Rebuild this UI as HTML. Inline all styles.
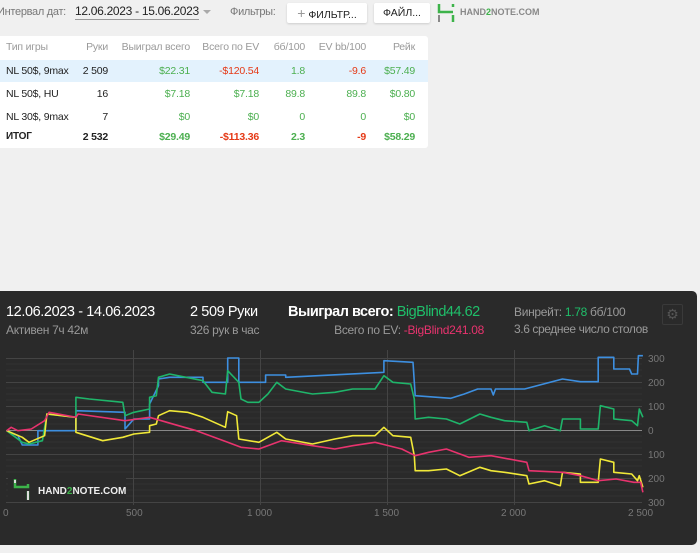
<!DOCTYPE html>
<html><head><meta charset="utf-8"><style>
*{margin:0;padding:0;box-sizing:border-box}
body{width:700px;height:553px;background:#f0f0f0;font-family:"Liberation Sans",sans-serif;position:relative;overflow:hidden}
.a{position:absolute;white-space:nowrap}
.g{color:#4caf50}.r{color:#e53916}
.card{position:absolute;left:0;top:36px;width:428px;height:112px;background:#fff;border-radius:0 3px 3px 0}
.row{position:absolute;left:0;width:428px;height:22px;font-size:10.5px;color:#222;letter-spacing:-0.2px}
.row span{position:absolute;top:5px}
.h span{color:#9a9a9a}
.c1{left:6px}.c2{right:320px}.c3{right:238px}.c4{right:169px}.c5{right:123px}.c6{right:62px}.c7{right:13px}
.btn{position:absolute;top:3px;height:20px;background:#fff;border-radius:2px;box-shadow:0 1px 2px rgba(0,0,0,.15);font-size:10.5px;color:#222;line-height:20px;text-align:center}
.panel{position:absolute;left:0;top:291px;width:697px;height:254px;background:#2a2a2a;border-radius:0 5px 5px 0}
</style></head><body>
<div class="a" style="left:-3px;top:6px;font-size:11px;color:#777;letter-spacing:-0.3px">Интервал дат:</div>
<div class="a" style="left:75px;top:4px;font-size:12px;color:#222;border-bottom:1px solid #999;padding-bottom:1px;letter-spacing:-0.3px">12.06.2023 - 15.06.2023</div>
<div class="a" style="left:203px;top:10px;width:0;height:0;border-left:4px solid transparent;border-right:4px solid transparent;border-top:4px solid #aaa"></div>
<div class="a" style="left:230px;top:6px;font-size:11px;color:#777;letter-spacing:-0.3px">Фильтры:</div>
<div class="btn" style="left:287px;width:80px"><span style="color:#999;font-size:14px">+</span> ФИЛЬТР...</div>
<div class="btn" style="left:374px;width:56px">ФАЙЛ...</div>
<svg class="a" style="left:437px;top:3px" width="20" height="20" viewBox="0 0 20 20"><path d="M2 1v8h14M16 1v3M16 12v7" stroke="#3db34a" stroke-width="2.5" fill="none"/><path d="M2 12v7" stroke="#888" stroke-width="2"/></svg>
<div class="a" style="left:460px;top:7px;font-size:9px;font-weight:bold;color:#888">HAND<span style="color:#3db34a">2</span>NOTE.COM</div>

<div class="card">
<div class="row h" style="top:0"><span class="c1">Тип игры</span><span class="c2">Руки</span><span class="c3">Выиграл всего</span><span class="c4">Всего по EV</span><span class="c5">бб/100</span><span class="c6">EV bb/100</span><span class="c7">Рейк</span></div>
<div class="row" style="top:24px;background:#e3f2fd"><span class="c1">NL 50$, 9max</span><span class="c2">2 509</span><span class="c3 g">$22.31</span><span class="c4 r">-$120.54</span><span class="c5 g">1.8</span><span class="c6 r">-9.6</span><span class="c7 g">$57.49</span></div>
<div class="row" style="top:47px"><span class="c1">NL 50$, HU</span><span class="c2">16</span><span class="c3 g">$7.18</span><span class="c4 g">$7.18</span><span class="c5 g">89.8</span><span class="c6 g">89.8</span><span class="c7 g">$0.80</span></div>
<div class="row" style="top:70px"><span class="c1">NL 30$, 9max</span><span class="c2">7</span><span class="c3 g">$0</span><span class="c4 g">$0</span><span class="c5 g">0</span><span class="c6 g">0</span><span class="c7 g">$0</span></div>
<div class="row" style="top:90px;font-weight:bold"><span class="c1" style="font-size:10px">ИТОГ</span><span class="c2">2 532</span><span class="c3 g">$29.49</span><span class="c4 r">-$113.36</span><span class="c5 g">2.3</span><span class="c6 r">-9</span><span class="c7 g">$58.29</span></div>
</div>

<div class="panel"></div>
<div class="a" style="left:6px;top:304px;font-size:14.5px;color:#fff;letter-spacing:-0.4px">12.06.2023 - 14.06.2023</div>
<div class="a" style="left:6px;top:323px;font-size:12px;color:#999;letter-spacing:-0.3px">Активен 7ч 42м</div>
<div class="a" style="left:190px;top:304px;font-size:14.5px;color:#fff;letter-spacing:-0.4px">2 509 Руки</div>
<div class="a" style="left:190px;top:323px;font-size:12px;color:#999;letter-spacing:-0.3px">326 рук в час</div>
<div class="a" style="left:288px;top:304px;font-size:14.5px;color:#fff;font-weight:bold;letter-spacing:-0.5px">Выиграл всего: <span style="color:#1fbf6a;font-weight:normal">BigBlind44.62</span></div>
<div class="a" style="right:216px;top:323px;font-size:12px;color:#999;letter-spacing:-0.3px">Всего по EV: <span style="color:#e8336e">-BigBlind241.08</span></div>
<div class="a" style="left:514px;top:305px;font-size:12px;color:#999;letter-spacing:-0.3px">Винрейт: <span style="color:#1fbf6a">1.78</span> бб/100</div>
<div class="a" style="left:514px;top:322px;font-size:12px;color:#999;letter-spacing:-0.4px">3.6 среднее число столов</div>
<div class="a" style="left:662px;top:304px;width:21px;height:21px;border:1px solid #3a3a3a;border-radius:2px;color:#555;font-size:14px;text-align:center;line-height:19px">⚙</div>

<svg class="a" style="left:0;top:0" width="700" height="553">
<g stroke="#333" stroke-width="1">
<path d="M6 364H642M6 370H642M6 376H642M6 388H642M6 394H642M6 400H642M6 412H642M6 418H642M6 424H642M6 436H642M6 442H642M6 448H642M6 460H642M6 466H642M6 472H642M6 484H642M6 490H642M6 496H642"/>
</g>
<g stroke="#444" stroke-width="1">
<path d="M6 358.5H642M6 382.5H642M6 406.5H642M6 454.5H642M6 478.5H642M6 502.5H642M133.5 350V505M260.5 350V505M387.5 350V505M514.5 350V505"/>
</g>
<path d="M6 430.5H642" stroke="#888" stroke-width="1"/>
<g fill="none" stroke-width="1.6" stroke-linejoin="round">
<polyline stroke="#3d8fe0" points="6.7,430.7 17.9,435.7 22.3,445 37.9,445 37.9,430.7 75.9,430.7 75.9,410.7 125,412.3 125,429 133.9,419 149.6,419 149.6,404 158.5,385.7 158.5,379 169.6,377.3 203,377.3 203,382.3 227.7,382.3 227.7,358 238.8,358 238.8,382.3 265.6,382.3 265.6,375 285.7,375 285.7,377.3 383.9,372.3 383.9,360.7 413,362.3 415.2,395.7 450.9,398.3 464.3,394 477.7,389 491,389 493.3,395 495.5,389 524.6,389 562.5,379 580.4,381.7 598.2,381.7 598.2,357.3 613.8,357.3 613.8,369 629.5,369 631.7,374 637.5,374 638.4,355.7 642.9,355.7"/>
<polyline stroke="#1fb56a" points="6.7,430.7 22.3,442.3 29,444 42.4,440.7 46.9,414 75.9,417.3 75.9,397.3 89.3,399 122.8,402.3 125,415.7 133.9,412.3 149.6,409 149.6,397.3 156.3,395.7 158.5,377.3 169.6,374 203,380.7 212,392.3 225.4,394 227.7,370.7 238.8,382.3 241,399 247.8,402.3 258.9,402.3 267.9,394 276.8,382.3 285.7,389 312.5,394 334.8,392.3 352.7,389 375,389 383.9,375.7 392.9,382.3 410.7,384 414.3,399 415.2,419 428.6,417.3 446.4,419 459.8,424 479.9,414 491,417.3 504.5,420.7 526.8,422.3 529,430.7 544.6,425.7 560.3,430.7 562.5,419 580.4,419 580.4,429 598.2,429 600.4,405.7 613.8,409 613.8,419 631.7,420.7 637.5,425.7 639.3,409 642.9,417.3"/>
<polyline stroke="#f0e838" points="6.7,430.7 22.3,437.3 29,442.3 44.6,435.7 46.9,414 75.9,417.3 75.9,432.3 102.7,440.7 122.8,437.3 133.9,434 149.6,432.3 149.6,425.7 156.3,424 158.5,415.7 169.6,410.7 187.5,412.3 203,417.3 225.4,427.3 227.7,411.7 236.6,415.7 238.8,439 258.9,442.3 276.8,432.3 285.7,439 312.5,444 334.8,439 352.7,435.7 375,435.7 383.9,427.3 392.9,435.7 410.7,437.3 414.3,455.7 415.2,470.7 428.6,470.7 446.4,469 459.8,475.7 479.9,467.3 491,470.7 504.5,472.3 526.8,475.7 529,484 544.6,480.7 560.3,485.7 562.5,472.3 580.4,474 580.4,482.3 598.2,482.3 600.4,459 613.8,462.3 613.8,472.3 631.7,474 637.5,480.7 639.3,475.7 642.9,487.3"/>
<polyline stroke="#e8336e" points="6.7,430.7 11.2,427.3 17.9,430.7 31.3,429 44.6,420.7 49.1,412.3 75.9,417.3 78.1,414 125,420.7 149.6,417.3 178.6,425.7 196.4,430.7 227.7,442.3 241,447.3 258.9,449 281.3,440.7 312.5,445.7 334.8,449 352.7,445.7 375,442.3 401.8,449 415.2,455.7 428.6,452.3 446.4,449 468.8,457.3 491,455.7 526.8,462.3 529,470.7 562.5,472.3 580.4,475.7 598.2,480.7 616.1,479 633.9,482.3 640.6,482.3 642.9,492.3"/>
</g>
<g fill="#777" font-family="Liberation Sans" font-size="10">
<text x="648" y="362">300</text><text x="648" y="386">200</text><text x="648" y="410">100</text><text x="648" y="434">0</text><text x="648" y="458">100</text><text x="648" y="482">200</text><text x="648" y="506">300</text>
<text x="3" y="516">0</text><text x="126" y="516">500</text><text x="247" y="516">1 000</text><text x="374" y="516">1 500</text><text x="501" y="516">2 000</text><text x="628" y="516">2 500</text>
</g>
<rect x="8" y="476" width="118" height="26" fill="#2a2a2a"/>
<path d="M15 479v8h13v-3M28 491v9" stroke="#3db34a" stroke-width="2.5" fill="none"/>
<path d="M28 491v9M15 480v3" stroke="#ddd" stroke-width="2"/>
<text x="38" y="494" fill="#eee" font-family="Liberation Sans" font-size="10" font-weight="bold">HAND<tspan fill="#3db34a">2</tspan>NOTE.COM</text>
</svg>
</body></html>
